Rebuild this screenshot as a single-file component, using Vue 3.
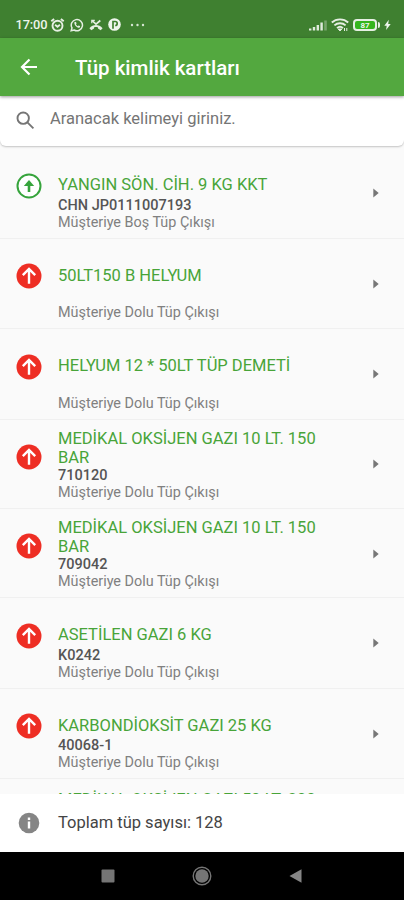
<template>
  <div class="screen">
    <header class="status-bar">
      <div class="status-left">
        <span class="clock">17:00</span>
        <svg class="alarm" width="15" height="14" viewBox="0 0 14 14" fill="none" stroke="#e6efe3" stroke-width="1.9">
          <circle cx="7" cy="7.8" r="5" />
          <path d="M.8 3.2 3.6.9M13.2 3.2 10.4.9M4.6 6.8 7 8.7l2.4-1.9" />
        </svg>
        <svg class="whatsapp" width="14" height="14" viewBox="0 0 14 14" fill="none" stroke="#e6efe3" stroke-width="1.5">
          <path d="M1.2 12.8 2 9.9a5.6 5.6 0 1 1 2.1 2.1z" />
          <path d="M4.7 3.8c-1 1.4.1 3.3 1.2 4.4s2.9 2.1 4.2 1.1l-.1-1.2-1.5-.7-.8.8C6.9 7.7 6.3 7.1 5.9 6.3l.7-.8-.6-1.6z" fill="#e6efe3" stroke="none" />
        </svg>
        <svg class="missed" width="14" height="12" viewBox="0 0 14 12">
          <path d="M3 1.5 7 5.2l4.3-3.7" fill="none" stroke="#e6efe3" stroke-width="1.7" />
          <path d="M2.8 4.2V1.3h3" fill="none" stroke="#e6efe3" stroke-width="1.2" />
          <path d="M.4 9.3c3.6-4.4 9.6-4.4 13.2 0l-1.9 2-2.7-1.7V8.4c-1.3-.4-2.7-.4-4 0v1.2l-2.7 1.7z" fill="#e6efe3" />
        </svg>
        <svg class="parking" width="13" height="13" viewBox="0 0 13 13">
          <circle cx="6.5" cy="6.5" r="6.3" fill="#eef5ec" />
          <path d="M5 10.8V3.5h2.2a2 2 0 0 1 0 4" fill="none" stroke="#3f8030" stroke-width="1.7" />
        </svg>
        <svg class="more" width="15" height="4" viewBox="0 0 15 4" fill="#d6e6d2">
          <circle cx="2" cy="2" r="1.2" /><circle cx="7.5" cy="2" r="1.2" /><circle cx="13" cy="2" r="1.2" />
        </svg>
      </div>
      <div class="status-right">
        <svg width="19" height="12" viewBox="0 0 19 12" fill="#dfeadc">
          <rect x="0" y="9.5" width="2.4" height="2" /><rect x="3.8" y="8" width="2.4" height="3.5" />
          <rect x="7.6" y="6" width="2.4" height="5.5" /><rect x="11.4" y="3.5" width="2.4" height="8" />
          <rect x="15.2" y="1.5" width="2.6" height="10" opacity=".35" />
        </svg>
        <svg class="wifi" width="18" height="14" viewBox="0 0 18 14" fill="none" stroke="#e6efe3" stroke-width="1.9">
          <path d="M.8 4.5c4.6-4.2 11.8-4.2 16.4 0M3.4 7.4c3.1-2.8 8.1-2.8 11.2 0M6 10.1c1.7-1.5 4.3-1.5 6 0" />
          <path d="m7.2 11 1.8 2 1.8-2zM13.5 10v3M15.8 10v3" fill="#e6efe3" stroke-width="1" />
        </svg>
        <div class="battery">87</div>
        <svg class="bolt" width="7" height="12" viewBox="0 0 7 12"><path d="M4.8.8.3 6.7h2.4l-.6 4.3 4.6-6H4.2z" fill="#eef5ec" /></svg>
      </div>
    </header>

    <div class="app-bar">
      <svg width="18" height="18" viewBox="0 0 18 18" fill="none" stroke="#fff" stroke-width="2.2">
        <path d="M17 9H2.5M9.5 1.5 2 9l7.5 7.5" />
      </svg>
      <h1>Tüp kimlik kartları</h1>
    </div>

    <label class="search">
      <svg width="19" height="19" viewBox="0 0 19 19" fill="none" stroke="#757575" stroke-width="1.9">
        <circle cx="7.2" cy="7.2" r="5.7" />
        <path d="m11.4 11.4 6 6" />
      </svg>
      <input v-model="query" type="text" placeholder="Aranacak kelimeyi giriniz." />
    </label>

    <main class="list">
      <div v-for="(item, i) in filtered" :key="i" class="row" :class="{ tall: item.wrap }">
        <svg v-if="item.empty" class="direction" width="26" height="26" viewBox="0 0 26 26">
          <circle cx="13" cy="13" r="11.5" fill="#fff" stroke="#36a43c" stroke-width="2" />
          <path d="M13 19v-9" stroke="#36a43c" stroke-width="2.6" />
          <path d="m7.8 13 5.2-6 5.2 6z" fill="#36a43c" />
        </svg>
        <svg v-else class="direction" width="26" height="26" viewBox="0 0 26 26">
          <circle cx="13" cy="13" r="12.5" fill="#ee2e24" />
          <path d="M13 20.8V6M6.8 12.2 13 6l6.2 6.2" fill="none" stroke="#fff" stroke-width="2.4" />
        </svg>
        <div class="info">
          <div class="name">{{ item.name }}</div>
          <div class="code">{{ item.code }}</div>
          <div class="state">{{ item.empty ? 'Müşteriye Boş Tüp Çıkışı' : 'Müşteriye Dolu Tüp Çıkışı' }}</div>
        </div>
        <svg class="chevron" width="6" height="10" viewBox="0 0 6 10"><path d="M.3.5v9L5.7 5z" fill="#777" /></svg>
      </div>
    </main>

    <footer class="total">
      <svg width="22" height="22" viewBox="0 0 22 22">
        <circle cx="11" cy="11" r="10.3" fill="#858585" />
        <path d="M11 9.5V16.500M11 5.500v2.500" fill="none" stroke="#fff" stroke-width="2.400" />
      </svg>
      <span>Toplam tüp sayısı: 128</span>
    </footer>

    <nav class="nav-bar">
      <svg width="14" height="14" viewBox="0 0 14 14"><rect x=".5" y=".5" width="13" height="13" rx="1" fill="#757575" /></svg>
      <svg width="20" height="20" viewBox="0 0 20 20">
        <circle cx="10" cy="10" r="8.8" fill="none" stroke="#757575" stroke-width="1.4" />
        <circle cx="10" cy="10" r="6.7" fill="#757575" />
      </svg>
      <svg width="13" height="14" viewBox="0 0 13 14"><path d="M12.5.3v13.4L.5 7z" fill="#858585" /></svg>
    </nav>
  </div>
</template>

<script setup>
import { computed, ref } from 'vue'

const query = ref('')

const items = [
  { name: 'YANGIN SÖN. CİH. 9 KG KKT', code: 'CHN JP0111007193', empty: true },
  { name: '50LT150 B HELYUM', code: '' },
  { name: 'HELYUM 12 * 50LT TÜP DEMETİ', code: '' },
  { name: 'MEDİKAL OKSİJEN GAZI 10 LT. 150 BAR', code: '710120', wrap: true },
  { name: 'MEDİKAL OKSİJEN GAZI 10 LT. 150 BAR', code: '709042', wrap: true },
  { name: 'ASETİLEN GAZI 6 KG', code: 'K0242' },
  { name: 'KARBONDİOKSİT GAZI 25 KG', code: '40068-1' },
  { name: 'MEDİKAL OKSİJEN GAZI 50 LT. 200 BAR', code: '', wrap: true },
]

const filtered = computed(() => {
  const q = query.value.toLocaleLowerCase('tr')
  return items.filter((item) => `${item.name} ${item.code}`.toLocaleLowerCase('tr').includes(q))
})
</script>

<style>
body {
  margin: 0;
}
</style>

<style scoped>
.screen {
  width: 404px;
  height: 900px;
  display: flex;
  flex-direction: column;
  overflow: hidden;
  background: #fafafa;
  font-family: Roboto, "Liberation Sans", sans-serif;
}

svg {
  display: block;
  flex: none;
}

.status-bar {
  height: 38px;
  flex: none;
  box-sizing: border-box;
  padding: 11px 13px 0 15.5px;
  display: flex;
  justify-content: space-between;
  background: #3f8030;
  color: #eef5ec;
}

.status-left,
.status-right {
  display: flex;
  align-items: center;
  height: 27px;
}

.clock {
  width: 32px;
  font-size: 12.8px;
  font-weight: 500;
  letter-spacing: -0.1px;
}

.alarm { margin-left: 2px; }
.whatsapp { margin-left: 5px; }
.missed { margin-left: 5px; }
.parking { margin-left: 5px; }
.more { margin-left: 9px; }
.wifi { margin-left: 3px; }

.battery {
  position: relative;
  width: 20px;
  height: 8px;
  margin-left: 4px;
  border: 2px solid #e6efe3;
  border-radius: 4px;
  background: #35b51d;
  font-size: 8px;
  font-weight: 700;
  line-height: 9px;
  text-align: center;
}

.battery::after {
  content: '';
  position: absolute;
  top: 1px;
  right: -5px;
  width: 2px;
  height: 6px;
  border-radius: 0 2px 2px 0;
  background: #e6efe3;
}

.bolt { margin-left: 7px; }

.app-bar {
  position: relative;
  z-index: 1;
  height: 58px;
  flex: none;
  box-sizing: border-box;
  padding: 0 20px;
  display: flex;
  align-items: center;
  background: #53a83f;
  box-shadow: 0 1px 3px rgba(0, 0, 0, 0.4);
}

.app-bar h1 {
  margin: 2px 0 0 37px;
  color: #fff;
  font-size: 20.5px;
  font-weight: 500;
  line-height: 24px;
}

.search {
  height: 50px;
  flex: none;
  box-sizing: border-box;
  padding: 0 16px 5px;
  display: flex;
  align-items: center;
  background: #fff;
  border-radius: 0 0 6px 6px;
  box-shadow: 0 1px 2px rgba(0, 0, 0, 0.22);
}

.search svg {
  margin-top: 4px;
}

.search input {
  flex: 1;
  min-width: 0;
  margin-left: 15px;
  padding: 0;
  border: none;
  outline: none;
  background: none;
  color: #424242;
  font-family: inherit;
  font-size: 16.5px;
}

.search input::placeholder {
  color: #757575;
}

.list {
  flex: 1;
  min-height: 0;
  padding-top: 2px;
  overflow: hidden;
}

.row {
  height: 90.6px;
  box-sizing: border-box;
  padding: 0 25px 7px 16px;
  display: flex;
  align-items: flex-end;
  border-bottom: 1px solid #f0f0f0;
}

.row.tall {
  height: 89.2px;
}

.direction {
  align-self: flex-start;
  margin-top: 24.5px;
}

.info {
  width: 276px;
  margin-left: 16px;
}

.name {
  margin-bottom: 2px;
  color: #48a439;
  font-size: 16.5px;
  line-height: 19.4px;
}

.tall .name {
  margin-bottom: -0.6px;
}

.tall:last-child {
  padding-bottom: 5.5px;
}

.code {
  height: 18px;
  color: #555;
  font-size: 14.5px;
  font-weight: 500;
  line-height: 18px;
}

.state {
  color: #808080;
  font-size: 14.4px;
  line-height: 16px;
}

.chevron {
  align-self: center;
  margin: 8px 0 0 39px;
}

.total {
  height: 58px;
  flex: none;
  box-sizing: border-box;
  padding: 0 18px 1px;
  display: flex;
  align-items: center;
  background: #fff;
  color: #444;
  font-size: 16.5px;
}

.total span {
  margin-left: 18px;
}

.nav-bar {
  height: 48px;
  flex: none;
  box-sizing: border-box;
  padding: 0 102px 0 101px;
  display: flex;
  align-items: center;
  justify-content: space-between;
  background: #000;
}
</style>
